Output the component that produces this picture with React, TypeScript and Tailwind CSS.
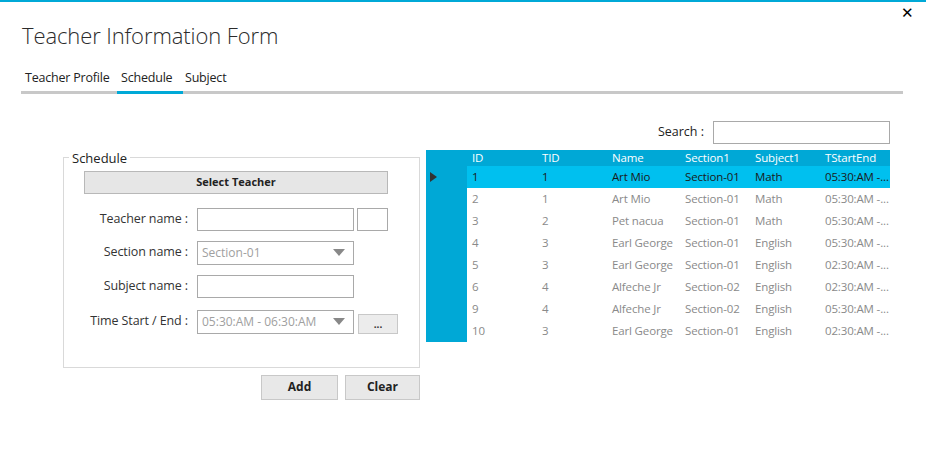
import React from "react";

const rows = [
  ["1", "1", "Art Mio", "Section-01", "Math", "05:30:AM -..."],
  ["2", "1", "Art Mio", "Section-01", "Math", "05:30:AM -..."],
  ["3", "2", "Pet nacua", "Section-01", "Math", "05:30:AM -..."],
  ["4", "3", "Earl George", "Section-01", "English", "05:30:AM -..."],
  ["5", "3", "Earl George", "Section-01", "English", "02:30:AM -..."],
  ["6", "4", "Alfeche Jr", "Section-02", "English", "02:30:AM -..."],
  ["9", "4", "Alfeche Jr", "Section-02", "English", "05:30:AM -..."],
  ["10", "3", "Earl George", "Section-01", "English", "02:30:AM -..."],
];

const cols = ["ID", "TID", "Name", "Section1", "Subject1", "TStartEnd"];
const colW = ["w-[70px]", "w-[70px]", "w-[73px]", "w-[70px]", "w-[70px]", "w-[70px]"];

const Caret = () => (
  <svg width="12" height="7" viewBox="0 0 12 7" className="fill-[#888]">
    <path d="M0 0h12L6 7z" />
  </svg>
);

const Field = ({ label, children }: { label: string; children: React.ReactNode }) => (
  <div className="flex items-center">
    <span className="w-[133px] pr-[9px] text-right text-[12.5px] tracking-[-0.1px] text-[#333]">{label}</span>
    {children}
  </div>
);

export default function App() {
  return (
    <div className="relative h-[449px] w-[926px] overflow-hidden border-t-2 border-[#00a9d7] bg-white font-['Open_Sans',sans-serif] text-[#333]">
      <div className="flex items-start justify-between">
        <h1 className="ml-[22px] mt-[17px] text-[22px] font-light tracking-[-0.1px] text-[#2b2b2b]">
          Teacher Information Form
        </h1>
        <button className="mr-[12px] mt-[3px] text-[15px] leading-none text-black">✕</button>
      </div>

      <div className="ml-[21px] mt-[17px] flex w-[882px] border-b-[3px] border-[#c8c8c8] text-[12.5px] tracking-[-0.2px] text-[#222]">
        <div className="w-[96px] pb-[3px] pl-[4px]">Teacher Profile</div>
        <div className="-mb-[3px] w-[66px] border-b-[3px] border-[#00a9d7] pb-[3px] pl-[4px]">Schedule</div>
        <div className="pb-[3px] pl-[2px]">Subject</div>
      </div>

      <div className="mt-[26px] flex">
        <div className="ml-[63px] mt-[31px] w-[357px]">
          <fieldset className="h-[217px] border border-[#d9d9d9] px-0">
            <legend className="ml-[5px] px-[3px] text-[13px] leading-[14px] text-[#222]">Schedule</legend>
            <div className="px-[20px]">
              <button className="mt-[6px] h-[23px] w-[304px] border border-[#b8b8b8] bg-[#e6e6e6] text-[11px] font-bold text-[#222]">
                Select Teacher
              </button>
            </div>
            <div className="mt-[14px] flex flex-col">
              <Field label="Teacher name :">
                <div className="h-[23px] w-[157px] border border-[#a9a9a9]" />
                <div className="ml-[3px] h-[23px] w-[31px] border border-[#a9a9a9]" />
              </Field>
              <div className="mt-[10px]">
                <Field label="Section name :">
                  <div className="flex h-[24px] w-[157px] items-center justify-between border border-[#a9a9a9] pl-[4px] pr-[8px] text-[12px] text-[#a0a0a0]">
                    Section-01
                    <Caret />
                  </div>
                </Field>
              </div>
              <div className="mt-[10px]">
                <Field label="Subject name :">
                  <div className="h-[23px] w-[157px] border border-[#a9a9a9]" />
                </Field>
              </div>
              <div className="mt-[12px]">
                <Field label="Time Start / End :">
                  <div className="flex h-[24px] w-[157px] items-center justify-between border border-[#a9a9a9] pl-[4px] pr-[8px] text-[12px] text-[#a0a0a0]">
                    05:30:AM - 06:30:AM
                    <Caret />
                  </div>
                  <button className="ml-[4px] mt-[4px] h-[20px] w-[40px] border border-[#c8c8c8] bg-[#ececec] text-[10px] font-bold leading-none text-[#333]">
                    ...
                  </button>
                </Field>
              </div>
            </div>
          </fieldset>
          <div className="mt-[7px] flex justify-end gap-[7px]">
            <button className="h-[25px] w-[77px] border border-[#c8c8c8] bg-[#e8e8e8] text-[12px] font-bold text-[#222]">Add</button>
            <button className="h-[25px] w-[75px] border border-[#c8c8c8] bg-[#e8e8e8] text-[12px] font-bold text-[#222]">Clear</button>
          </div>
        </div>

        <div className="ml-[6px] w-[464px]">
          <div className="mt-[1px] flex items-center justify-end">
            <span className="mr-[9px] text-[12.5px] text-[#222]">Search :</span>
            <div className="h-[23px] w-[177px] border border-[#a9a9a9]" />
          </div>
          <div className="mt-[6px] text-[11.5px] tracking-[-0.15px]">
            <div className="flex h-[16px] items-center bg-[#00a8d6] text-white">
              <div className="w-[41px]" />
              {cols.map((c, i) => (
                <div key={c} className={`${colW[i]} pl-[5px] leading-none`}>{c}</div>
              ))}
            </div>
            {rows.map((r, ri) => (
              <div
                key={ri}
                className={ri === 0 ? "flex h-[22px] items-center bg-[#00c0ef] text-[#1a1a1a]" : "flex h-[22px] items-center text-[#8a8a8a]"}
              >
                <div className="flex h-full w-[41px] items-center bg-[#00a8d6] pl-[4px]">
                  {ri === 0 && (
                    <svg width="7" height="10" viewBox="0 0 7 10" className="fill-[#333]">
                      <path d="M0 0l7 5-7 5z" />
                    </svg>
                  )}
                </div>
                {r.map((v, i) => (
                  <div key={i} className={`${colW[i]} whitespace-nowrap pl-[5px]`}>{v}</div>
                ))}
              </div>
            ))}
          </div>
        </div>
      </div>
    </div>
  );
}
